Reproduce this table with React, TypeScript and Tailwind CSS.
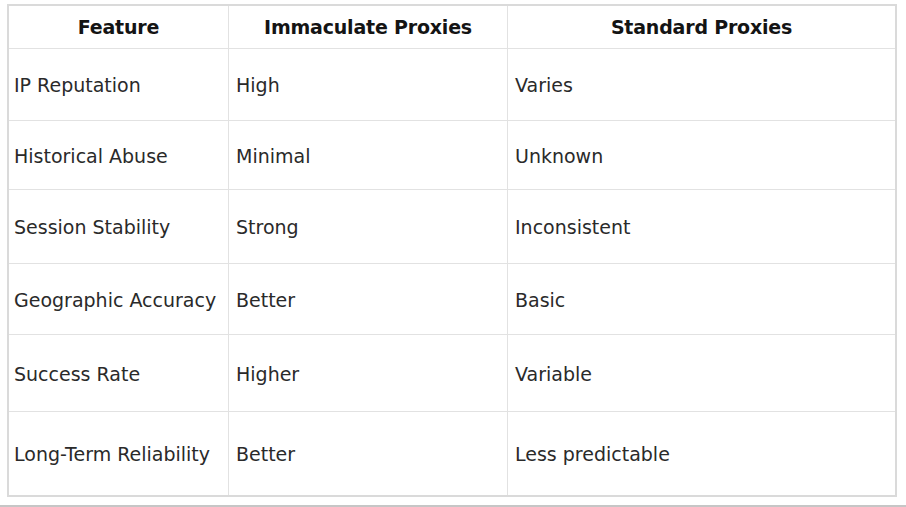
const rows: [string, string, string][] = [
  ["IP Reputation", "High", "Varies"],
  ["Historical Abuse", "Minimal", "Unknown"],
  ["Session Stability", "Strong", "Inconsistent"],
  ["Geographic Accuracy", "Better", "Basic"],
  ["Success Rate", "Higher", "Variable"],
  ["Long-Term Reliability", "Better", "Less predictable"],
];

const headers = ["Feature", "Immaculate Proxies", "Standard Proxies"];

export default function App() {
  return (
    <div className="flex h-[507px] w-[906px] flex-col bg-white font-['DejaVu_Sans',sans-serif] text-[#2a2a2a]">
      <div className="pl-[7px] pt-[4px]">
        <div className="grid w-[890px] grid-cols-[220px_279px_1fr] grid-rows-[43px_72px_69px_74px_71px_77px_83px] border-2 border-[#dadada]">
          {headers.map((h, i) => (
            <div
              key={h}
              className={`flex items-center justify-center border-b border-[#e2e2e2] text-[19px] font-bold tracking-[-0.2px] text-[#141414] ${
                i < 2 ? "border-r" : ""
              }`}
            >
              {h}
            </div>
          ))}
          {rows.map((row, r) =>
            row.map((cell, c) => (
              <div
                key={`${r}-${c}`}
                className={`flex items-center border-[#e2e2e2] pt-[2px] text-[19px] ${
                  c < 2 ? "border-r" : ""
                } ${r < rows.length - 1 ? "border-b" : ""} ${c > 0 ? "pl-[7px]" : "pl-[5px]"}`}
              >
                {cell}
              </div>
            ))
          )}
        </div>
      </div>
      <div className="mt-[8px] h-[2px] w-full bg-[#c6c6c6]" />
    </div>
  );
}
